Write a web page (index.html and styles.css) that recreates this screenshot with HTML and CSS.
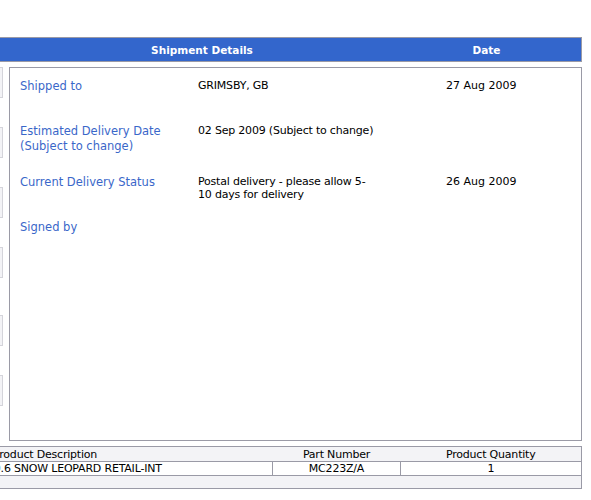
FILE: index.html
```html
<!DOCTYPE html>
<html lang="en">
<head>
    <meta charset="UTF-8">
    <title>Shipment Details</title>
    <link rel="stylesheet" href="styles.css">
</head>
<body>
    <div class="page">
        <div class="head-bar">
            <div class="head-main">Shipment Details</div>
            <div class="head-date">Date</div>
        </div>

        <div class="middle">
            <div class="side">
                <div class="side-box"></div>
                <div class="side-box"></div>
                <div class="side-box"></div>
                <div class="side-box"></div>
                <div class="side-box far"></div>
                <div class="side-box"></div>
            </div>

            <div class="details">
                <div class="row r1">
                    <div class="label">Shipped to</div>
                    <div class="value">GRIMSBY, GB</div>
                    <div class="date">27 Aug 2009</div>
                </div>
                <div class="row r2">
                    <div class="label">Estimated Delivery Date<br>(Subject to change)</div>
                    <div class="value nowrap">02 Sep 2009 (Subject to change)</div>
                    <div class="date"></div>
                </div>
                <div class="row r3">
                    <div class="label">Current Delivery Status</div>
                    <div class="value">Postal delivery - please allow 5-<br>10 days for delivery</div>
                    <div class="date">26 Aug 2009</div>
                </div>
                <div class="row">
                    <div class="label">Signed by</div>
                    <div class="value"></div>
                    <div class="date"></div>
                </div>
            </div>
        </div>

        <table class="products">
            <tr class="th">
                <td class="c-desc">Product Description</td>
                <td class="c-part">Part Number</td>
                <td class="c-qty">Product Quantity</td>
            </tr>
            <tr class="td">
                <td class="c-desc"><span class="shift">10.6 SNOW LEOPARD RETAIL-INT</span></td>
                <td class="c-part">MC223Z/A</td>
                <td class="c-qty">1</td>
            </tr>
            <tr class="tf">
                <td colspan="3"></td>
            </tr>
        </table>
    </div>
</body>
</html>
```

FILE: styles.css
```css
body {
    margin: 0;
    overflow: hidden;
    background: #fff;
    font-family: "DejaVu Sans", Verdana, sans-serif;
    font-size: 11px;
    color: #000;
}
.page {
    width: 591px;
    height: 500px;
    padding-top: 37px;
    box-sizing: border-box;
}
.head-bar {
    display: flex;
    width: 592px;
    height: 25px;
    margin-left: -10px;
    box-sizing: border-box;
    border: 1px solid #9a9aa6;
    background: #3366cc;
    color: #fff;
    font-size: 10.5px;
    font-weight: bold;
    line-height: 24px;
}
.head-main {
    width: 401px;
    padding-left: 21px;
    text-align: center;
    box-sizing: border-box;
}
.head-date {
    flex: 1;
    text-align: center;
}
.middle {
    display: flex;
    gap: 5px;
    margin-top: 5px;
}
.side {
    width: 4px;
    overflow: hidden;
    display: flex;
    flex-direction: column;
    gap: 29px;
}
.side-box {
    width: 20px;
    height: 31px;
    margin-left: -17px;
    flex: none;
    box-sizing: border-box;
    border: 1px solid #d4d4da;
    background: #f3f3f6;
}
.side-box.far {
    margin-top: 8px;
}
.details {
    width: 573px;
    height: 374px;
    box-sizing: border-box;
    border: 1px solid #9a9aa6;
    padding: 11px 0 0 10px;
    display: grid;
    grid-template-columns: 178px 248px 1fr;
    grid-template-rows: 45px 51px 45px 1fr;
}
.row {
    display: contents;
}
.label {
    color: #3a67c9;
    font-size: 11.5px;
    line-height: 15px;
}
.value, .date {
    line-height: 13px;
}
.value {
    letter-spacing: -0.2px;
}
.nowrap {
    white-space: nowrap;
}
.products {
    width: 590px;
    margin: 5px 0 0 -8px;
    border-collapse: collapse;
    border-top: 1px solid #9a9aa6;
    border-bottom: 1px solid #9a9aa6;
    border-right: 1px solid #9a9aa6;
    line-height: 13px;
    letter-spacing: -0.2px;
}
.products td {
    padding: 0;
}
.th td {
    background: #f3f3f6;
    border-bottom: 1px solid #9a9aa6;
    padding-top: 1px;
}
.td td {
    border-right: 1px solid #9a9aa6;
    border-bottom: 1px solid #9a9aa6;
}
.tf td {
    height: 12px;
    background: #f3f3f6;
}
.c-desc {
    width: 279px;
}
.c-part {
    width: 127px;
    text-align: center;
}
.c-qty {
    text-align: center;
}
.products .c-desc {
    padding-left: 1px;
}
.shift {
    margin-left: -6px;
}
```
